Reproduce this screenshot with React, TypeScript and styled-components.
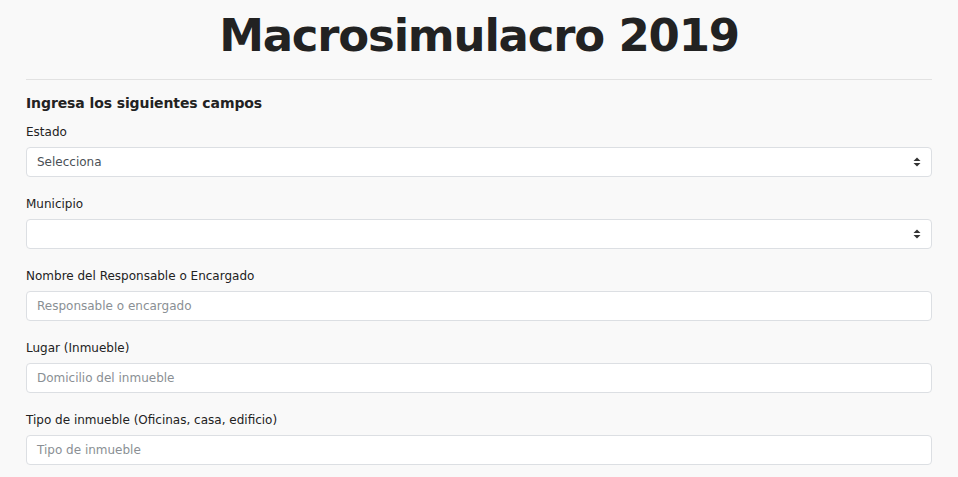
import React from "react";
import styled, { createGlobalStyle } from "styled-components";

const Global = createGlobalStyle`
  html, body { margin: 0; padding: 0; background: #f9f9f9; }
  body { font-family: "DejaVu Sans", "Noto Sans", sans-serif; color: #212529; }
  * { box-sizing: border-box; }
`;

const Page = styled.div`
  padding: 0 26px;
`;

const Title = styled.h1`
  margin: 6px 0 0;
  height: 60px;
  line-height: 60px;
  text-align: center;
  font-size: 45px;
  font-weight: 700;
  color: #222;
  letter-spacing: -1.2px;
`;

const Rule = styled.hr`
  margin: 13px 0 0;
  border: 0;
  border-top: 1px solid #e2e2e2;
`;

const Heading = styled.h4`
  margin: 11px 0 6px;
  height: 24px;
  line-height: 24px;
  font-size: 14px;
  font-weight: 700;
  color: #222;
  letter-spacing: -0.1px;
`;

const Group = styled.div`
  display: flex;
  flex-direction: column;
  gap: 5px;
  margin-bottom: 16px;
`;

const Label = styled.label`
  display: block;
  height: 21px;
  padding-top: 1px;
  line-height: 20px;
  font-size: 12px;
  color: #222;
`;

const Field = styled.div`
  position: relative;
  height: 30px;
  background: #fff;
  border: 1px solid #dcdfe3;
  border-radius: 4px;
  display: flex;
  align-items: center;
  padding: 0 10px;
  font-size: 12px;
`;

const Value = styled.span<{ $placeholder?: boolean }>`
  color: ${(p) => (p.$placeholder ? "#8a8f94" : "#4a4f55")};
`;

const Caret = styled.svg`
  position: absolute;
  right: 10px;
  top: 50%;
  transform: translateY(-50%);
`;

const SortIcon = () => (
  <Caret width="8" height="10" viewBox="0 0 8 10">
    <path d="M4 0.5 L7.5 4 L0.5 4 Z" fill="#333" />
    <path d="M4 9.5 L7.5 6 L0.5 6 Z" fill="#333" />
  </Caret>
);

type Item = { label: string; value: string; placeholder?: boolean; select?: boolean };

const items: Item[] = [
  { label: "Estado", value: "Selecciona", select: true },
  { label: "Municipio", value: "", select: true },
  { label: "Nombre del Responsable o Encargado", value: "Responsable o encargado", placeholder: true },
  { label: "Lugar (Inmueble)", value: "Domicilio del inmueble", placeholder: true },
  { label: "Tipo de inmueble (Oficinas, casa, edificio)", value: "Tipo de inmueble", placeholder: true },
];

export default function App() {
  return (
    <Page>
      <Global />
      <Title>Macrosimulacro 2019</Title>
      <Rule />
      <Heading>Ingresa los siguientes campos</Heading>
      {items.map((it) => (
        <Group key={it.label}>
          <Label>{it.label}</Label>
          <Field>
            <Value $placeholder={it.placeholder}>{it.value}</Value>
            {it.select && <SortIcon />}
          </Field>
        </Group>
      ))}
    </Page>
  );
}
